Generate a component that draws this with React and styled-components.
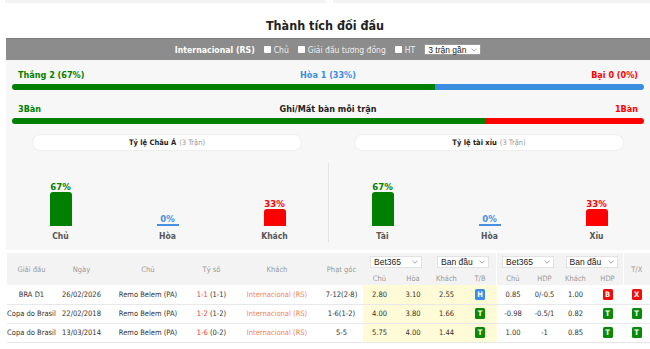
import React from "react";
import styled, { createGlobalStyle } from "styled-components";

const GlobalStyle = createGlobalStyle`
  html, body { margin: 0; padding: 0; background: #fff; }
  body {
    font-family: "DejaVu Sans Condensed", "DejaVu Sans", sans-serif;
    font-stretch: condensed;
    color: #333;
  }
  * { box-sizing: border-box; }
`;

const Page = styled.div`
  width: 650px;
  height: 349px;
  overflow: hidden;
  background: #fff;
`;

const TopStrip = styled.div`
  display: grid;
  grid-template-columns: 321px 1fr;
  column-gap: 7px;
  padding-left: 5px;
  height: 3px;
`;

const StripPiece = styled.div`
  background: #f3f3f3;
`;

const Title = styled.h2`
  margin: 15px 0 4px;
  text-align: center;
  font-size: 12.5px;
  line-height: 16px;
  font-weight: 700;
  color: #222;
`;

const Section = styled.section`
  margin-left: 6px;
  width: 644px;
`;

const FilterBar = styled.div`
  height: 22px;
  background: #8c8c8c;
  border-top: 1px solid #7b7b7b;
  display: flex;
  align-items: center;
  justify-content: center;
  gap: 9px;
  color: #f2f2f2;
  font-size: 8.5px;
`;

const TeamName = styled.span`
  font-weight: 700;
  color: #fff;
  font-size: 8.7px;
`;

const CheckItem = styled.label`
  display: flex;
  align-items: center;
  gap: 3px;
  color: #eee;
`;

const Check = styled.span`
  width: 7px;
  height: 7px;
  background: #fff;
  border-radius: 1px;
`;

const SelectBox = styled.div`
  display: flex;
  align-items: center;
  justify-content: space-between;
  width: ${(p) => p.$w}px;
  height: ${(p) => p.$h}px;
  padding: 0 3px 0 3px;
  background: #fff;
  border: 1px solid ${(p) => p.$border || "#bbb"};
  font-family: "Liberation Sans", Arial, sans-serif;
  font-size: 8.5px;
  color: #222;
  margin: ${(p) => (p.$center ? "0 auto" : "0")};
`;

const Chevron = () => (
  <svg width="6" height="4" viewBox="0 0 6 4">
    <path d="M0.5 0.8 L3 3.2 L5.5 0.8" fill="none" stroke="#888" strokeWidth="0.8" />
  </svg>
);

const Panel = styled.div`
  background: #f7f7f7;
  padding: 9px 0 8px;
`;

const Totals = styled.div`
  padding: 0 6px;
`;

const LabelRow = styled.div`
  display: grid;
  grid-template-columns: 1fr auto 1fr;
  align-items: center;
  height: 12px;
  padding: 0 6px;
  margin-top: ${(p) => p.$mt || 0}px;
  font-size: 9px;
  font-weight: 700;
`;

const Label = styled.span`
  color: ${(p) => p.$color};
  justify-self: ${(p) => p.$align};
`;

const Progress = styled.div`
  display: flex;
  height: 6px;
  margin-top: 3px;
  border-radius: 3px;
  overflow: hidden;
`;

const Segment = styled.div`
  flex: ${(p) => p.$grow} 0 0;
  background: ${(p) => p.$color};
`;

const OddsGrid = styled.div`
  display: grid;
  grid-template-columns: 322px 322px;
  margin-top: 10px;
`;

const OddsCard = styled.div``;

const Pill = styled.div`
  margin: 0 26px;
  height: 17px;
  border-radius: 9px;
  background: #fff;
  border: 1px solid #eee;
  display: flex;
  align-items: center;
  justify-content: center;
  gap: 3px;
  font-size: 7.5px;
  font-weight: 700;
  color: #222;
`;

const PillCount = styled.span`
  font-weight: 400;
  color: #999;
`;

const ChartRow = styled.div`
  display: grid;
  grid-template-columns: repeat(3, 1fr);
  height: 79px;
  margin-top: 12px;
  border-left: 1px solid ${(p) => (p.$divider ? "#e4e4e4" : "transparent")};
`;

const ChartCol = styled.div`
  display: flex;
  flex-direction: column;
  justify-content: flex-end;
  align-items: center;
`;

const Pct = styled.div`
  font-size: 9.5px;
  line-height: 11px;
  font-weight: 700;
  color: ${(p) => p.$color};
`;

const Bar = styled.div`
  width: 22px;
  height: ${(p) => p.$h}px;
  background: ${(p) => p.$color};
  border-radius: ${(p) => (p.$h > 3 ? "3px 3px 0 0" : "0")};
`;

const ChartName = styled.div`
  margin-top: 4px;
  font-size: 8.5px;
  line-height: 12px;
  font-weight: 700;
  color: #555;
`;

const Table = styled.table`
  margin-top: 3px;
  width: 643px;
  border-collapse: collapse;
  table-layout: fixed;
  font-size: 7.5px;
`;

const HeadCell = styled.th`
  background: #f3f3f3;
  color: #9a9a9a;
  font-weight: 400;
  text-align: center;
  padding: 0;
  height: ${(p) => p.$h || 16}px;
  border-left: 1px solid ${(p) => (p.$sep ? "#fff" : "transparent")};
`;

const Row = styled.tr`
  border-bottom: 1px solid #e8e8e8;
`;

const Cell = styled.td`
  height: 19px;
  padding: 0;
  text-align: center;
  white-space: nowrap;
  color: #333;
  background: ${(p) => (p.$hl ? "#fefbd6" : "#fff")};
`;

const Score = styled.span`
  color: #e83b3b;
`;

const Away = styled.span`
  color: #f0865a;
`;

const Badge = styled.span`
  display: inline-block;
  width: 10px;
  height: 11px;
  line-height: 11px;
  border-radius: 1.5px;
  font-size: 7.5px;
  font-weight: 700;
  color: #fff;
  background: ${(p) => p.$bg};
`;

const badgeColor = { H: "#3b8ee6", T: "#078a07", B: "#f20d0d", X: "#f20d0d" };

const charts = [
  {
    title: "Tỷ lệ Châu Á",
    items: [
      { name: "Chủ", pct: 67, color: "#008000" },
      { name: "Hòa", pct: 0, color: "#4a90e2" },
      { name: "Khách", pct: 33, color: "#ff0000" },
    ],
  },
  {
    title: "Tỷ lệ tài xỉu",
    items: [
      { name: "Tài", pct: 67, color: "#008000" },
      { name: "Hòa", pct: 0, color: "#4a90e2" },
      { name: "Xỉu", pct: 33, color: "#ff0000" },
    ],
  },
];

const rows = [
  { league: "BRA D1", date: "26/02/2026", ft: "1-1", ht: "(1-1)", corner: "7-12(2-8)", o: ["2.80", "3.10", "2.55"], tb: "H", a: ["0.85", "0/-0.5", "1.00"], hdp: "B", tx: "X" },
  { league: "Copa do Brasil", date: "22/02/2018", ft: "1-2", ht: "(1-2)", corner: "1-6(1-2)", o: ["4.00", "3.80", "1.66"], tb: "T", a: ["-0.98", "-0.5/1", "0.82"], hdp: "T", tx: "T" },
  { league: "Copa do Brasil", date: "13/03/2014", ft: "1-6", ht: "(0-2)", corner: "5-5", o: ["5.75", "4.00", "1.44"], tb: "T", a: ["1.00", "-1", "0.85"], hdp: "T", tx: "T" },
];

const colWidths = [50, 50, 83, 44, 87, 42, 34, 33, 34, 33, 33, 30, 32, 32, 26];

const HeadSelect = ({ label }) => (
  <SelectBox $w={52} $h={12} $border="#e2e2e2" $center>
    <span>{label}</span>
    <Chevron />
  </SelectBox>
);

export default function App() {
  return (
    <Page>
      <GlobalStyle />
      <TopStrip>
        <StripPiece />
        <StripPiece />
      </TopStrip>
      <Title>Thành tích đối đầu</Title>
      <Section>
        <FilterBar>
          <TeamName>Internacional (RS)</TeamName>
          <CheckItem>
            <Check />
            Chủ
          </CheckItem>
          <CheckItem>
            <Check />
            Giải đấu tương đồng
          </CheckItem>
          <CheckItem>
            <Check />
            HT
          </CheckItem>
          <SelectBox $w={57} $h={11} $border="#999">
            <span>3 trận gần</span>
            <Chevron />
          </SelectBox>
        </FilterBar>
        <Panel>
          <Totals>
            <LabelRow>
              <Label $color="#008000" $align="start">Thắng 2 (67%)</Label>
              <Label $color="#3b8de0" $align="center">Hòa 1 (33%)</Label>
              <Label $color="#ff0000" $align="end">Bại 0 (0%)</Label>
            </LabelRow>
            <Progress>
              <Segment $grow={67} $color="#008000" />
              <Segment $grow={33} $color="#3b8de0" />
            </Progress>
            <LabelRow $mt={13}>
              <Label $color="#008000" $align="start">3Bàn</Label>
              <Label $color="#222" $align="center">Ghi/Mất bàn mỗi trận</Label>
              <Label $color="#ff0000" $align="end">1Bàn</Label>
            </LabelRow>
            <Progress>
              <Segment $grow={75} $color="#008000" />
              <Segment $grow={25} $color="#ff0000" />
            </Progress>
          </Totals>
          <OddsGrid>
            {charts.map((c, i) => (
              <OddsCard key={c.title}>
                <Pill>
                  {c.title}
                  <PillCount>(3 Trận)</PillCount>
                </Pill>
                <ChartRow $divider={i === 1}>
                  {c.items.map((it) => (
                    <ChartCol key={it.name}>
                      <Pct $color={it.color}>{it.pct}%</Pct>
                      <Bar $h={it.pct === 0 ? 2 : Math.round(it.pct * 0.51)} $color={it.color} />
                      <ChartName>{it.name}</ChartName>
                    </ChartCol>
                  ))}
                </ChartRow>
              </OddsCard>
            ))}
          </OddsGrid>
        </Panel>
        <Table>
          <colgroup>
            {colWidths.map((w, i) => (
              <col key={i} style={{ width: w }} />
            ))}
          </colgroup>
          <thead>
            <tr>
              <HeadCell rowSpan={2}>Giải đấu</HeadCell>
              <HeadCell rowSpan={2}>Ngày</HeadCell>
              <HeadCell rowSpan={2}>Chủ</HeadCell>
              <HeadCell rowSpan={2}>Tỷ số</HeadCell>
              <HeadCell rowSpan={2}>Khách</HeadCell>
              <HeadCell rowSpan={2}>Phạt góc</HeadCell>
              <HeadCell colSpan={2} $h={18}><HeadSelect label="Bet365" /></HeadCell>
              <HeadCell colSpan={2} $h={18}><HeadSelect label="Ban đầu" /></HeadCell>
              <HeadCell colSpan={2} $h={18} $sep><HeadSelect label="Bet365" /></HeadCell>
              <HeadCell colSpan={2} $h={18}><HeadSelect label="Ban đầu" /></HeadCell>
              <HeadCell rowSpan={2} $sep>T/X</HeadCell>
            </tr>
            <tr>
              <HeadCell $h={14}>Chủ</HeadCell>
              <HeadCell $h={14}>Hòa</HeadCell>
              <HeadCell $h={14}>Khách</HeadCell>
              <HeadCell $h={14}>T/B</HeadCell>
              <HeadCell $h={14} $sep>Chủ</HeadCell>
              <HeadCell $h={14}>HDP</HeadCell>
              <HeadCell $h={14}>Khách</HeadCell>
              <HeadCell $h={14}>HDP</HeadCell>
            </tr>
          </thead>
          <tbody>
            {rows.map((r) => (
              <Row key={r.date}>
                <Cell>{r.league}</Cell>
                <Cell>{r.date}</Cell>
                <Cell>Remo Belem (PA)</Cell>
                <Cell>
                  <Score>{r.ft}</Score> {r.ht}
                </Cell>
                <Cell>
                  <Away>Internacional (RS)</Away>
                </Cell>
                <Cell>{r.corner}</Cell>
                {r.o.map((v, i) => (
                  <Cell key={i} $hl>{v}</Cell>
                ))}
                <Cell $hl>
                  <Badge $bg={badgeColor[r.tb]}>{r.tb}</Badge>
                </Cell>
                {r.a.map((v, i) => (
                  <Cell key={i}>{v}</Cell>
                ))}
                <Cell>
                  <Badge $bg={badgeColor[r.hdp]}>{r.hdp}</Badge>
                </Cell>
                <Cell>
                  <Badge $bg={badgeColor[r.tx]}>{r.tx}</Badge>
                </Cell>
              </Row>
            ))}
          </tbody>
        </Table>
      </Section>
    </Page>
  );
}
